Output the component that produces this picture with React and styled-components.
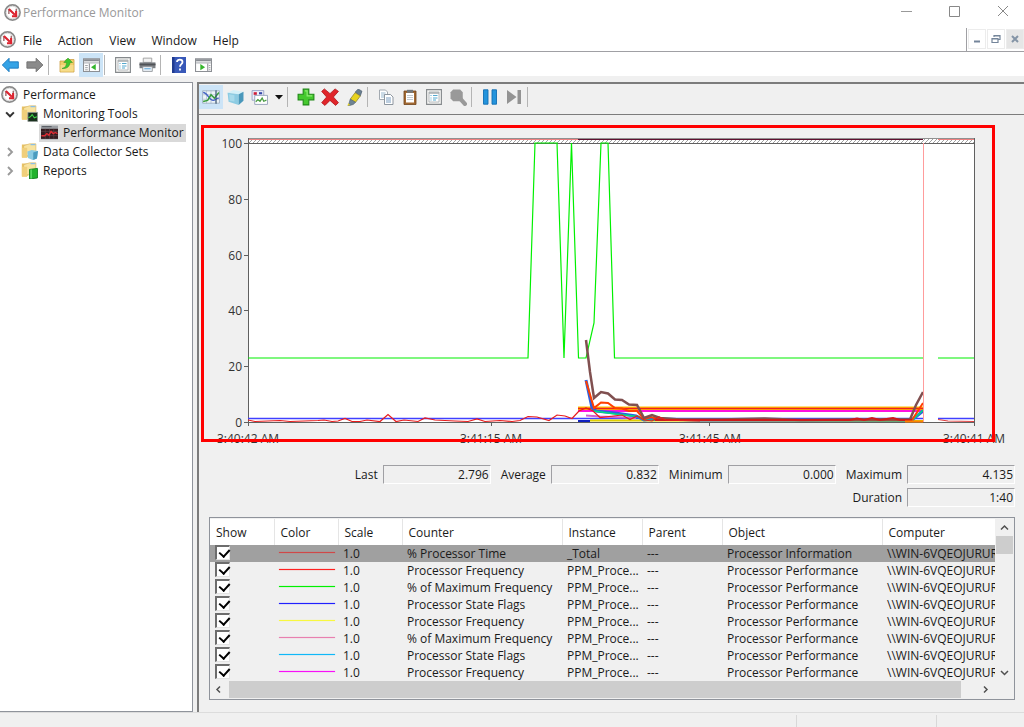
import React from 'react'
import styled, { createGlobalStyle } from 'styled-components';

const theme = {
    face: '#f0f0f0',
    line: '#a0a0a4',
    dark: '#7c7c7c',
    active: '#cce4f7',
    font: '"Open Sans", "Noto Sans", sans-serif',
};

const GlobalStyle = createGlobalStyle`
    * { box-sizing: border-box; }
    body {
        margin: 0;
        background-color: ${theme.face};
        font-family: ${theme.font};
        font-size: 12px;
        color: #1a1a1a;
    }
    button {
        border: none;
        padding: 0;
        background: none;
        font: inherit;
        color: inherit;
    }
    svg { display: block; }
`;

const Window = styled.div`
    display: flex;
    flex-direction: column;
    height: 100vh;
    overflow: hidden;
`;

const TitleBar = styled.header`
    display: flex;
    align-items: center;
    gap: 2px;
    height: 24px;
    padding-left: 4px;
    background-color: #fff;
    color: #999;
`;

const Title = styled.h1`
    flex: 1;
    margin: 0;
    font-size: 12px;
    font-weight: 400;
`;

const Captions = styled.div`
    display: flex;
    gap: 6px;
`;

const CaptionButton = styled.button`
    display: grid;
    place-items: center;
    width: 42px;
    height: 24px;
`;

const MenuBar = styled.nav`
    display: flex;
    align-items: center;
    height: 28px;
    background-color: #fff;
    border-bottom: 1px solid ${theme.line};
`;

const Menus = styled.div`
    display: flex;
    flex: 1;
    gap: 16px;
    padding-left: 7px;
    padding-top: 6px;
`;

const MenuLogo = styled.div`
    padding-top: 4px;
    margin-left: -1px;
`;

const MdiButtons = styled.div`
    display: flex;
    align-self: flex-end;
    gap: 1px;
    height: 23px;
    padding-left: 1px;
    border-left: 1px solid ${theme.line};
`;

const MdiButton = styled.button`
    display: grid;
    place-items: center;
    width: 18px;
    height: 20px;
    margin-top: 1px;
    border: 1px solid #ececec;
    background-color: ${p => (p.$shaded ? '#e6e6e6' : '#fff')};
`;

const Toolbar = styled.div`
    display: flex;
    align-items: center;
    height: ${p => (p.$inner ? '30px' : '24px')};
    padding-bottom: ${p => (p.$inner ? '4px' : '0')};
    padding-top: ${p => (p.$inner ? '0' : '1px')};
    margin-left: ${p => (p.$inner ? '0' : '-1px')};
    background-color: ${p => (p.$inner ? theme.face : '#fff')};
    box-shadow: ${p => (p.$inner ? `0 1px ${theme.dark}` : 'none')};
`;

const ToolButton = styled.button`
    display: grid;
    place-items: center;
    width: ${p => (p.$narrow ? '15px' : '24px')};
    height: 24px;
    background-color: ${p => (p.$active ? theme.active : 'transparent')};
`;

const Separator = styled.span`
    width: 1px;
    height: 20px;
    margin: 0 6px 0 1px;
    background-color: #b4b4b4;
`;

const Main = styled.main`
    display: flex;
    flex: 1;
    gap: 4px;
    min-height: 0;
    padding-top: 6px;
`;

const Sidebar = styled.aside`
    width: 193px;
    padding-top: 2px;
    background-color: #fff;
    border: 1px solid #8f939b;
    border-left: none;
`;

const Tree = styled.ul`
    margin: 0;
    padding: 0;
    list-style: none;
`;

const TreeRow = styled.li`
    display: flex;
    align-items: center;
    height: 19px;
    padding-left: ${p => p.$indent}px;
`;

const Twisty = styled.button`
    display: grid;
    place-items: center;
    width: 18px;
    height: 19px;
`;

const TreeLabel = styled.span`
    display: flex;
    align-items: center;
    gap: 5px;
    height: 18px;
    padding: 0 2px;
    background-color: ${p => (p.$selected ? '#d9d9d9' : 'transparent')};
`;

const Content = styled.section`
    display: flex;
    flex-direction: column;
    flex: 1;
    min-width: 0;
    border-top: 2px solid ${theme.dark};
    border-left: 2px solid ${theme.dark};
`;

const Chart = styled.svg`
    width: 100%;
    height: auto;
    margin-top: 1px;
    text {
        font-family: ${theme.font};
        font-size: 12px;
        fill: #333;
    }
`;

const Stats = styled.div`
    display: flex;
    flex-wrap: wrap;
    justify-content: flex-end;
    gap: 4px 10px;
    padding: 15px 9px 10px 120px;
`;

const Stat = styled.label`
    display: flex;
    align-items: center;
    gap: 5px;
`;

const Readout = styled.output`
    width: 108px;
    height: 19px;
    padding-right: 1px;
    line-height: 18px;
    text-align: right;
    border: 1px solid #fff;
    border-top-color: ${theme.line};
    border-left-color: ${theme.line};
`;

const ListBox = styled.div`
    display: grid;
    grid-template-columns: minmax(0, 1fr) 18px;
    margin: 0 9px 12px 10px;
    padding: 1px 1px 1px 0;
    border: 1px solid #8f939b;
`;

const Clip = styled.div`
    height: 162px;
    overflow: hidden;
`;

const Table = styled.table`
    width: 100%;
    table-layout: fixed;
    border-collapse: collapse;
`;

const Th = styled.th`
    width: ${p => (p.$width ? `${p.$width}px` : 'auto')};
    height: 26px;
    padding: 0 0 0 6px;
    text-align: left;
    font-weight: 400;
    background-color: #fff;
    border-right: 1px solid #e5e5e5;
    &:last-child { border-right: none; }
`;

const Tr = styled.tr`
    background-color: ${p => (p.$selected ? '#a0a0a0' : 'transparent')};
`;

const Td = styled.td`
    height: 17px;
    padding: 0 0 0 5px;
    line-height: 17px;
    white-space: nowrap;
    overflow: hidden;
    text-overflow: ${p => (p.$clip ? 'clip' : 'ellipsis')};
`;

const Check = styled.input`
    appearance: none;
    display: block;
    width: 15px;
    height: 15px;
    margin: 0 0 2px;
    border: 1px solid #e4e4e4;
    border-top: 2px solid #6d6d6d;
    border-left: 2px solid #6d6d6d;
    background: #fff;
    &:checked::before {
        content: '';
        display: block;
        width: 5px;
        height: 8px;
        margin: 0 0 0 4px;
        border: solid #000;
        border-width: 0 2px 2px 0;
        transform: rotate(42deg);
    }
`;

const Swatch = styled.div`
    height: 1px;
    margin: 0 3px 2px 0;
    background-color: ${p => p.$color};
    box-shadow: 0 0 1px ${p => p.$color};
`;

const VScroll = styled.div`
    display: grid;
    grid-template-rows: 17px 1fr 17px;
    justify-items: center;
`;

const HScroll = styled.div`
    grid-column: 1 / -1;
    display: grid;
    grid-template-columns: 18px 1fr 18px 18px;
    height: 17px;
`;

const ScrollButton = styled.button`
    display: grid;
    place-items: center;
    width: 17px;
    height: 17px;
`;

const VThumb = styled.div`
    width: 17px;
    height: 18px;
    background-color: #cdcdcd;
`;

const HThumb = styled.div`
    margin: 0 16px 0 1px;
    background-color: #cdcdcd;
`;

const StatusBar = styled.footer`
    display: flex;
    justify-content: flex-end;
    height: 15px;
    border-top: 1px solid #dcdcdc;
`;

const StatusCell = styled.div`
    width: ${p => p.$width}px;
    margin-top: 2px;
    border-left: 1px solid #d8d8d8;
`;

const Icon = ({ size = 16, children }) => (
    <svg width={size} height={size} viewBox="0 0 16 16" aria-hidden="true">{children}</svg>
);

const Logo = () => (
    <Icon size={17}>
        <circle cx="8" cy="8" r="7.1" fill="#fff" stroke="#8a8a8a" strokeWidth="1.6" />
        <circle cx="8" cy="8" r="5.9" fill="none" stroke="#d2d2d2" strokeWidth=".8" />
        <path d="M4.600 9.500V4.800M11.500 7V4.500" fill="none" stroke="#8d4a4e" strokeWidth="1.100" />
        <path d="M4.600 4.600l5.600 5.600M11.400 6.500v5H7.500" fill="none" stroke="#dc2430" strokeWidth="2" />
    </Icon>
);

const Arrow = ({ back }) => (
    <Icon size={18}>
        {back
            ? <path d="M.3 8l6-6v3.200h8.200v5.600H6.300V14z" fill="#35a3e6" stroke="#1a78bd" strokeWidth=".8" />
            : <path d="M15 8L9 2v3.200H.8v5.600H9V14z" fill="#8b8b8b" stroke="#6e6e6e" strokeWidth=".8" />}
    </Icon>
);

const FolderUp = () => (
    <Icon>
        <path d="M1 4h5l1-1.5h8V15H1z" fill="#f1cf6b" stroke="#cba045" strokeWidth=".8" />
        <path d="M1.5 8h13v6.5h-13z" fill="#f6dc8a" />
        <path d="M3 11.500c3.500-1 4.500-3 4.500-6H4.800L9 1l4.500 4.500H11C10.800 9 8.500 12 3 11.500z" fill="#3fc62f" stroke="#2a951f" strokeWidth=".5" />
    </Icon>
);

const PaneIcon = ({ right }) => (
    <Icon size={17}>
        <path d="M.5 2.500h15v12H.5z" fill="#fff" stroke="#8c8f94" />
        <path d="M1 3h14v2H1z" fill="#888c92" />
        <path d="M1 6.500h14" stroke="#a7abb0" />
        <path d={right ? 'M12 7v7' : 'M6 7v7'} stroke="#8c8f94" />
        {right
            ? <path d="M5 7.500l4.500 3L5 13.500z" fill="#35b52c" />
            : <path d="M12 7.500l-4.500 3 4.500 3z" fill="#35b52c" />}
        <path d={right ? 'M13 9h1.500M13 11h1.500M13 13h1.500' : 'M2 9h2.500M2 11h2.500M2 13h2.500'} stroke="#8c8f94" strokeWidth=".8" />
    </Icon>
);

const Properties = () => (
    <Icon>
        <path d="M.6.600h14.800v14.800H.6z" fill="#f4f4f2" stroke="#85898c" strokeWidth="1.100" />
        <path d="M3 3h10v10H3z" fill="#fff" stroke="#a6abae" strokeWidth=".8" />
        <path d="M3 4h10" stroke="#a6abae" strokeWidth="1.500" />
        <path d="M4.500 6.500h1M4.500 9h1M4.500 11h1M7 6.500h4.500M7 9h4.500M7 11h3" stroke="#54a9cf" />
    </Icon>
);

const Printer = () => (
    <Icon size={17}>
        <path d="M4 2h8v4H4z" fill="#f2f2f2" stroke="#9a9a9a" strokeWidth=".8" />
        <path d="M.5 6h15v5.500H.5z" fill="#7b7f84" />
        <path d="M.5 8h15" stroke="#505357" strokeWidth="1.600" />
        <path d="M3.500 10h9v4.500h-9z" fill="#edf4fa" stroke="#8e9296" strokeWidth=".8" />
        <path d="M5 12h6" stroke="#63a8d9" />
    </Icon>
);

const Help = () => (
    <Icon>
        <path d="M1 0h14v16H1z" fill="#3858b8" />
        <path d="M1 0h2.500v16H1z" fill="#203b91" />
        <path d="M6 5c0-3.200 5.500-3.200 5.500 0 0 2.200-2.500 2-2.500 4.800M9 11.500v2" fill="none" stroke="#fff" strokeWidth="1.800" />
    </Icon>
);

const GraphIcon = () => (
    <Icon size={18}>
        <path d="M.5 2.500h15v11H.5z" fill="#eef5f9" stroke="#99aabd" strokeWidth=".7" />
        <path d="M4 2v12M8 2v12M12 2v12M1 6h14M1 10h14" stroke="#a7bac9" strokeWidth=".6" />
        <path d="M1 4c4 0 5 7 9 7 2 0 2-2 5-2" fill="none" stroke="#4363c4" strokeWidth="1.200" />
        <path d="M1 12l4-1 3-5 3 3 4-5" fill="none" stroke="#379d3a" strokeWidth="1.300" />
        <path d="M12.500 2v12" stroke="#38556e" />
    </Icon>
);

const Cube = () => (
    <Icon size={17}>
        <path d="M.5 3.500L6 1l9.500 1.500L11 5z" fill="#d4f0f8" />
        <path d="M.5 3.500L11 5v10L1.500 12z" fill="#8ccbe2" />
        <path d="M11 5l4.500-2.500V11L11 15z" fill="#4a98bb" />
        <path d="M2 5l5 .8v6L2.500 11z" fill="#b9e4f1" opacity=".6" />
    </Icon>
);

const Gallery = () => (
    <Icon size={17}>
        <path d="M1 1.500h11v9H1z" fill="#eef0fb" stroke="#8f9bc2" strokeWidth=".8" />
        <path d="M2.500 3h3v2.500h-3z" fill="#cf1d37" />
        <path d="M7.500 3h3v2h-3z" fill="#3346a8" />
        <path d="M3.500 6h12v8.500h-12z" fill="#fff" stroke="#8f9bb5" strokeWidth=".8" />
        <path d="M4.500 12l2-2 2 1.500 2-3 1.500 3 2.500-1" fill="none" stroke="#4a9d43" strokeWidth="1.200" />
    </Icon>
);

const Plus = () => (
    <Icon size={18}>
        <path d="M5.500 1h5v4.500H15v5h-4.500V15h-5v-4.500H1v-5h4.500z" fill="#45c92e" stroke="#208a18" />
        <path d="M7 2.500h2v4.500h4.500" fill="none" stroke="#8dec73" />
    </Icon>
);

const Cross = () => (
    <Icon size={18}>
        <path d="M3 .800L8 5l4.500-4.200L15.500 3 11 8l4.500 5-2.500 2.500L8 11l-4.500 4.500L.6 13 5 8 .6 3z" fill="#e0262b" stroke="#ad1519" strokeWidth=".7" />
    </Icon>
);

const Highlighter = () => (
    <Icon size={17}>
        <path d="M8.500 3L11.500 0l3.500 2-1.500 4.500z" fill="#6a7f91" stroke="#465768" strokeWidth=".6" />
        <path d="M8.500 3.500l5 3-4.500 6-5-3z" fill="#e8d31f" stroke="#8c8133" strokeWidth=".7" />
        <path d="M4 9.500l5 3-2 2-5 1.500z" fill="#6f8492" stroke="#4f616e" strokeWidth=".5" />
        <path d="M2 13.500l2 1.500-2.500.8z" fill="#e8d31f" />
    </Icon>
);

const Copy = () => (
    <Icon>
        <path d="M1.500 1h6l2 2v7.500h-8z" fill="#fff" stroke="#98a0a8" strokeWidth=".9" />
        <path d="M3 4h4.500M3 6h4.500M3 8h3" stroke="#7fa4c2" strokeWidth=".8" />
        <path d="M6.500 5.500h6l2.500 2.500v7.500H6.500z" fill="#fff" stroke="#818b95" strokeWidth=".9" />
        <path d="M8 9h5M8 11h5M8 13h5" stroke="#5684b0" strokeWidth=".8" />
    </Icon>
);

const Paste = () => (
    <Icon>
        <path d="M2 2h12v13.500H2z" fill="#a26932" stroke="#70431b" strokeWidth=".8" />
        <path d="M4 4h8v9.500H4z" fill="#fff" />
        <path d="M5 6.500h6M5 8.500h6M5 10.500h6" stroke="#b4bdc4" strokeWidth=".8" />
        <path d="M5 .8h6v3H5z" fill="#72777b" />
    </Icon>
);

const Magnifier = () => (
    <Icon size={17}>
        <path d="M3 .500h6.500L12 3v6l-2.500 2.500H3L.5 9V3z" fill="#999" />
        <path d="M10 9.500l4 4.500" stroke="#999" strokeWidth="4" strokeLinecap="round" />
    </Icon>
);

const Pause = () => (
    <Icon>
        <path d="M1.500.800h4.500v14.400H1.500zM10 .800h4.500v14.400H10z" fill="#2494dc" stroke="#136eb2" strokeWidth=".9" />
    </Icon>
);

const Step = () => (
    <Icon>
        <path d="M1 1l9.500 7L1 15zM11.500 1H15v14h-3.500z" fill="#939393" />
    </Icon>
);

const Folder = ({ children }) => (
    <Icon size={17}>
        <path d="M.8 1.500h5l1 1.200V13H.8z" fill="#e8c265" />
        <path d="M2.500 2.500L8 .800h6V12H2.500z" fill="#f8e3a0" stroke="#d9b45c" strokeWidth=".6" />
        <path d="M9 1.500h4.500" stroke="#8bbfe6" strokeWidth="1.200" />
        <path d="M.8 4.500h5V14h-5z" fill="#f0cf7b" />
        {children}
    </Icon>
);

const MonitorIcon = () => (
    <Icon size={17}>
        <path d="M0 1.500h16v13H0z" fill="#9b9ea3" />
        <path d="M1 2.500h9" stroke="#55585e" />
        <path d="M0 4.500h16v9.500H0z" fill="#331c20" />
        <path d="M0 7h16M0 11h16M4 4.500V14M8 4.500V14M12 4.500V14" stroke="#69494d" strokeWidth=".5" />
        <path d="M.5 11h3l2-2 2 1.500 2-3.500 2 2 2-1 2 1" fill="none" stroke="#e02b33" strokeWidth="1.300" />
    </Icon>
);

const Chevron = ({ dir, color = '#505050', size = 9, width = 1.5 }) => {
    const paths = {
        up: 'M1 6.500L4.500 3 8 6.500',
        down: 'M1 3l3.500 3.500L8 3',
        left: 'M6 1.500L3 4.500l3 3',
        right: 'M3 1.500l3 3-3 3',
    };
    return (
        <svg width={size} height={size} viewBox="0 0 9 9" aria-hidden="true">
            <path d={paths[dir]} fill="none" stroke={color} strokeWidth={width} />
        </svg>
    );
};

const ticks = [100, 80, 60, 40, 20, 0];

const times = [
    { x: 248, label: '3:40:42 AM' },
    { x: 491, label: '3:41:15 AM' },
    { x: 710, label: '3:41:45 AM' },
    { x: 974, label: '3:40:41 AM' },
];

// order matters, later series cover the earlier ones
const series = [
    { color: '#4040ff', width: 1.5, points: '248,418.500 923,418.500' },
    { color: '#4040ff', width: 1.5, points: '938,418.500 974,418.500' },
    { color: '#00f000', width: 1.2, points: '248,358 528,358 535,143 557,143 564,358 571.500,143 578.500,358 586,358 594,323 601,143 608,143 614.500,358 923,358' },
    { color: '#00f000', width: 1.2, points: '938,358 974,358' },
    { color: '#ffc000', width: 4, points: '578,408.500 923,408.500' },
    { color: '#f02020', width: 1.5, points: '578,408.500 923,408.500' },
    { color: '#ff10e0', width: 2, points: '578,411 923,411' },
    { color: '#d060d0', width: 2, points: '586,415.500 600,416.500 636,418' },
    { color: '#e0d000', width: 2, points: '590,420.500 640,420.500 923,421' },
    { color: '#1020c0', width: 2, points: '578,421 590,421' },
    { color: '#3060e0', width: 3, points: '586,380 592,408 596,411 615,413 636,416 644,420 655,419 700,420 912,420 923,411' },
    { color: '#00e080', width: 1.5, points: '594,411 615,414 638,416.500 644,420 912,420.500 923,410' },
    { color: '#ff4000', width: 2, points: '586,381 594,408 601,402.500 608,403 615,408 622,408.500 629,411 637,411 644,419 651,417 658,419 680,420 912,420 923,403' },
    { color: '#805050', width: 2.5, points: '586,340 590,372 594,398 601,392 608,393.500 615,399.500 622,400 629,404.500 637,405 644,418 652,415 660,418 680,419.500 720,419.500 765,418.500 800,420 850,419.500 910,419.500 916,405 923,392' },
    { color: '#d01818', width: 2, points: '655,420 700,420 740,420 850,420 857,418.500 864,420 872,418 880,420 893,418 900,420 912,420' },
    { color: '#ff8000', width: 2, points: '905,421.500 923,421.500' },
    { color: '#e81c1c', width: 1.2, points: '248,420 255,421.500 280,420.500 290,421.500 318,420.500 324,420 332,421.500 338,421 345,418.500 352,421.500 360,421.500 367,420 380,421.500 388,414.500 396,421.500 404,420 418,421.500 425,418 435,420 455,421 468,421.500 477,419 485,421.500 500,420.500 512,421.500 520,420.500 528,416.500 537,417 549,420.500 557,415 565,416 572,418.500 579,411 586,408 593,411 600,417.500 622,415 630,419.500 637,416 644,420 652,421 659,417 666,420 700,421' },
    { color: '#e04040', width: 1.2, points: '938,419.500 948,421 974,421.500' },
];

const PerfChart = () => (
    <Chart viewBox="199 115 825 335" role="img" aria-label="Counter values over time">
        <defs>
            <pattern id="hatch" width="4" height="4" patternUnits="userSpaceOnUse">
                <path d="M0 4L4 0" stroke="#888" strokeWidth=".8" />
            </pattern>
        </defs>
        <rect x="248" y="138" width="727" height="284" fill="#fff" />
        <rect x="248" y="139" width="727" height="4" fill="url(#hatch)" />
        <path d="M248 138.500H975" stroke="#909090" />
        <path d="M248 139.500H578M938 139.500H974" stroke="#f08080" />
        <path d="M578 139.500H923" stroke="#601030" />
        <path d="M244 143.500H975M248.500 138V426M974.500 138V426M244 422.500H975M491.500 422V426M709.500 422V426" stroke="#606060" />
        {ticks.map(t => (
            <g key={t}>
                <path d={`M244 ${Math.round(422 - t * 2.79) + 0.5}h4`} stroke="#606060" />
                <text x="242" y={Math.round(422 - t * 2.79) + 5} textAnchor="end">{t}</text>
            </g>
        ))}
        {times.map(t => <text key={t.x} x={t.x} y="443" textAnchor="middle">{t.label}</text>)}
        {series.map((s, i) => (
            <polyline key={i} points={s.points} fill="none" stroke={s.color} strokeWidth={s.width} />
        ))}
        <path d="M923.500 143V422" stroke="#ff9c9c" strokeWidth="1" />
        <rect x="202.500" y="126.500" width="791" height="314" fill="none" stroke="#f00" strokeWidth="3" />
    </Chart>
);

const columns = [
    ['Show', 64], ['Color', 64], ['Scale', 64], ['Counter', 160],
    ['Instance', 80], ['Parent', 80], ['Object', 160], ['Computer'],
];

const counters = [
    { color: '#d04848', counter: '% Processor Time', instance: '_Total', object: 'Processor Information' },
    { color: '#ff2020', counter: 'Processor Frequency' },
    { color: '#00f000', counter: '% of Maximum Frequency' },
    { color: '#2020ff', counter: 'Processor State Flags' },
    { color: '#f8f840', counter: 'Processor Frequency' },
    { color: '#e880b0', counter: '% of Maximum Frequency' },
    { color: '#10b8f8', counter: 'Processor State Flags' },
    { color: '#f810f8', counter: 'Processor Frequency' },
];

const stats = [
    ['Last', '2.796'], ['Average', '0.832'], ['Minimum', '0.000'], ['Maximum', '4.135'], ['Duration', '1:40'],
];

export default function App() {
    return (
        <Window>
            <GlobalStyle />
            <TitleBar>
                <Logo />
                <Title>Performance Monitor</Title>
                <Captions>
                    <CaptionButton aria-label="Minimize">
                        <svg width="12" height="12"><path d="M0 5.500h11" stroke="#999" /></svg>
                    </CaptionButton>
                    <CaptionButton aria-label="Maximize">
                        <svg width="12" height="12"><path d="M.5.500h10v10H.5z" fill="none" stroke="#888" /></svg>
                    </CaptionButton>
                    <CaptionButton aria-label="Close">
                        <svg width="12" height="12"><path d="M1 0l10 10M11 0L1 10" stroke="#888" /></svg>
                    </CaptionButton>
                </Captions>
            </TitleBar>
            <MenuBar>
                <MenuLogo><Logo /></MenuLogo>
                <Menus>
                    <button>File</button>
                    <button>Action</button>
                    <button>View</button>
                    <button>Window</button>
                    <button>Help</button>
                </Menus>
                <MdiButtons>
                    <MdiButton aria-label="Minimize child">
                        <svg width="10" height="10"><path d="M2 7.500h6" stroke="#74859a" strokeWidth="2" /></svg>
                    </MdiButton>
                    <MdiButton aria-label="Restore child">
                        <svg width="10" height="10">
                            <path d="M3 3V1.500h6v4H7.500M1 4.500h6v4H1zM1 5h6M3 2h6" fill="none" stroke="#74859a" strokeWidth="1.200" />
                        </svg>
                    </MdiButton>
                    <MdiButton $shaded aria-label="Close child">
                        <svg width="10" height="10"><path d="M2 2l6 6M8 2L2 8" stroke="#8494a6" strokeWidth="2" /></svg>
                    </MdiButton>
                </MdiButtons>
            </MenuBar>
            <Toolbar>
                <ToolButton aria-label="Back"><Arrow back /></ToolButton>
                <ToolButton aria-label="Forward"><Arrow /></ToolButton>
                <Separator />
                <ToolButton aria-label="Up one level"><FolderUp /></ToolButton>
                <ToolButton $active aria-label="Console tree"><PaneIcon /></ToolButton>
                <Separator />
                <ToolButton aria-label="Properties"><Properties /></ToolButton>
                <ToolButton aria-label="Print"><Printer /></ToolButton>
                <Separator />
                <ToolButton aria-label="Help"><Help /></ToolButton>
                <ToolButton aria-label="Action pane"><PaneIcon right /></ToolButton>
            </Toolbar>
            <Main>
                <Sidebar>
                    <Tree>
                        <TreeRow $indent={1}>
                            <Logo />
                            <TreeLabel>&nbsp;Performance</TreeLabel>
                        </TreeRow>
                        <TreeRow $indent={1}>
                            <Twisty aria-label="Collapse"><Chevron dir="down" color="#333" width={1.8} size={10} /></Twisty>
                            <TreeLabel>
                                <Folder>
                                    <path d="M6.500 7h9v8.500h-9z" fill="#17301c" stroke="#8c9490" strokeWidth=".8" />
                                    <path d="M7 12l2-1 1.500-2 2 3 2.500-1" fill="none" stroke="#43d847" />
                                </Folder>
                                Monitoring Tools
                            </TreeLabel>
                        </TreeRow>
                        <TreeRow $indent={39}>
                            <TreeLabel $selected><MonitorIcon />Performance Monitor</TreeLabel>
                        </TreeRow>
                        <TreeRow $indent={1}>
                            <Twisty aria-label="Expand"><Chevron dir="right" color="#9a9a9a" width={1.4} size={12} /></Twisty>
                            <TreeLabel>
                                <Folder>
                                    <path d="M6 8l4-1.500 6 1-1 7-4 1.500-4.500-2z" fill="#8bcbe3" />
                                    <path d="M11.500 9L16 7.500l-1 7-3.500 1.500z" fill="#4b9cbf" />
                                </Folder>
                                Data Collector Sets
                            </TreeLabel>
                        </TreeRow>
                        <TreeRow $indent={1}>
                            <Twisty aria-label="Expand"><Chevron dir="right" color="#9a9a9a" width={1.4} size={12} /></Twisty>
                            <TreeLabel>
                                <Folder>
                                    <path d="M8 7l7.500-1v9L8 16z" fill="#22b22e" stroke="#0c7a18" strokeWidth=".8" />
                                    <path d="M9.500 7v8.500" stroke="#7bea7f" />
                                </Folder>
                                Reports
                            </TreeLabel>
                        </TreeRow>
                    </Tree>
                </Sidebar>
                <Content>
                    <Toolbar $inner>
                        <ToolButton $active aria-label="View current activity"><GraphIcon /></ToolButton>
                        <ToolButton aria-label="View log data"><Cube /></ToolButton>
                        <ToolButton aria-label="Change graph type"><Gallery /></ToolButton>
                        <ToolButton $narrow aria-label="Graph types">
                            <svg width="8" height="5"><path d="M0 0h8L4 4.500z" fill="#111" /></svg>
                        </ToolButton>
                        <Separator />
                        <ToolButton aria-label="Add"><Plus /></ToolButton>
                        <ToolButton aria-label="Delete"><Cross /></ToolButton>
                        <ToolButton aria-label="Highlight"><Highlighter /></ToolButton>
                        <Separator />
                        <ToolButton aria-label="Copy properties"><Copy /></ToolButton>
                        <ToolButton aria-label="Paste counter list"><Paste /></ToolButton>
                        <ToolButton aria-label="Properties"><Properties /></ToolButton>
                        <ToolButton aria-label="Zoom"><Magnifier /></ToolButton>
                        <Separator />
                        <ToolButton aria-label="Freeze display"><Pause /></ToolButton>
                        <ToolButton aria-label="Update data"><Step /></ToolButton>
                        <Separator />
                    </Toolbar>
                    <PerfChart />
                    <Stats>
                        {stats.map(([name, value]) => (
                            <Stat key={name}>
                                {name}
                                <Readout>{value}</Readout>
                            </Stat>
                        ))}
                    </Stats>
                    <ListBox>
                        <Clip>
                            <Table>
                                <thead>
                                    <tr>
                                        {columns.map(([name, width]) => <Th key={name} $width={width}>{name}</Th>)}
                                    </tr>
                                </thead>
                                <tbody>
                                    {counters.map((c, i) => (
                                        <Tr key={i} $selected={i === 0}>
                                            <Td><Check type="checkbox" defaultChecked aria-label={`Show ${c.counter}`} /></Td>
                                            <Td><Swatch $color={c.color} /></Td>
                                            <Td>1.0</Td>
                                            <Td>{c.counter}</Td>
                                            <Td>{c.instance || 'PPM_Proce...'}</Td>
                                            <Td>---</Td>
                                            <Td>{c.object || 'Processor Performance'}</Td>
                                            <Td $clip>{'\\\\WIN-6VQEOJURUR'}</Td>
                                        </Tr>
                                    ))}
                                </tbody>
                            </Table>
                        </Clip>
                        <VScroll>
                            <ScrollButton aria-label="Scroll up"><Chevron dir="up" /></ScrollButton>
                            <VThumb />
                            <ScrollButton aria-label="Scroll down"><Chevron dir="down" /></ScrollButton>
                        </VScroll>
                        <HScroll>
                            <ScrollButton aria-label="Scroll left"><Chevron dir="left" /></ScrollButton>
                            <HThumb />
                            <ScrollButton aria-label="Scroll right"><Chevron dir="right" /></ScrollButton>
                        </HScroll>
                    </ListBox>
                </Content>
            </Main>
            <StatusBar>
                <StatusCell $width={140} />
                <StatusCell $width={88} />
            </StatusBar>
        </Window>
    );
}
